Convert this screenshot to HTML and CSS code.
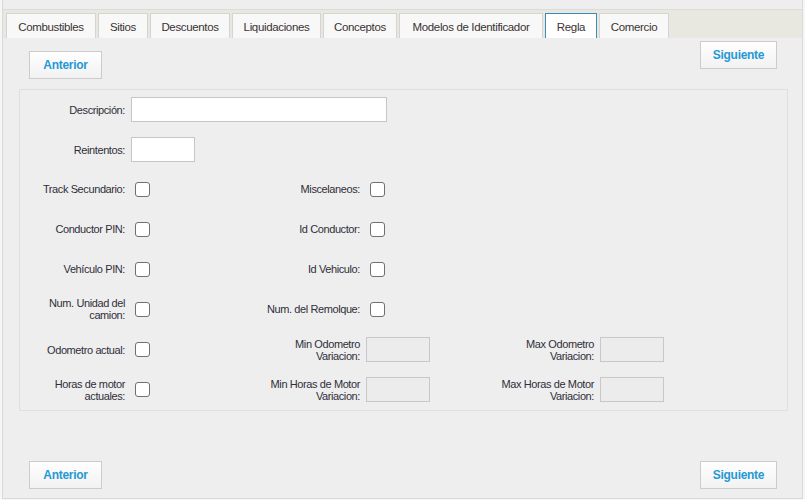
FILE: index.html
```html
<!DOCTYPE html>
<html lang="es">
<head>
<meta charset="utf-8">
<title>Regla</title>
<link rel="stylesheet" href="styles.css">
</head>
<body>
<div class="panel">
  <ul class="tabs">
    <li class="tab tab-combustibles">Combustibles</li>
    <li class="tab tab-sitios">Sitios</li>
    <li class="tab tab-descuentos">Descuentos</li>
    <li class="tab tab-liquidaciones">Liquidaciones</li>
    <li class="tab tab-conceptos">Conceptos</li>
    <li class="tab tab-modelos">Modelos de Identificador</li>
    <li class="tab tab-regla active">Regla</li>
    <li class="tab tab-comercio">Comercio</li>
  </ul>
  <div class="nav nav-top">
    <button class="btn btn-prev">Anterior</button>
    <button class="btn btn-next">Siguiente</button>
  </div>
  <div class="form">
    <div class="row">
      <div class="cell cell-full"><label class="lbl">Descripción:</label><input class="txt txt-wide" type="text"></div>
    </div>
    <div class="row">
      <div class="cell"><label class="lbl">Reintentos:</label><input class="txt txt-small" type="text"></div>
    </div>
    <div class="row">
      <div class="cell"><label class="lbl">Track Secundario:</label><input class="chk" type="checkbox"></div>
      <div class="cell"><label class="lbl">Miscelaneos:</label><input class="chk" type="checkbox"></div>
    </div>
    <div class="row">
      <div class="cell"><label class="lbl">Conductor PIN:</label><input class="chk" type="checkbox"></div>
      <div class="cell"><label class="lbl">Id Conductor:</label><input class="chk" type="checkbox"></div>
    </div>
    <div class="row">
      <div class="cell"><label class="lbl">Vehículo PIN:</label><input class="chk" type="checkbox"></div>
      <div class="cell"><label class="lbl">Id Vehiculo:</label><input class="chk" type="checkbox"></div>
    </div>
    <div class="row">
      <div class="cell"><label class="lbl">Num. Unidad del camion:</label><input class="chk" type="checkbox"></div>
      <div class="cell"><label class="lbl">Num. del Remolque:</label><input class="chk" type="checkbox"></div>
    </div>
    <div class="row">
      <div class="cell"><label class="lbl">Odometro actual:</label><input class="chk" type="checkbox"></div>
      <div class="cell"><label class="lbl">Min Odometro Variacion:</label><input class="txt txt-small" type="text" disabled></div>
      <div class="cell"><label class="lbl">Max Odometro Variacion:</label><input class="txt txt-small" type="text" disabled></div>
    </div>
    <div class="row">
      <div class="cell"><label class="lbl">Horas de motor actuales:</label><input class="chk" type="checkbox"></div>
      <div class="cell"><label class="lbl">Min Horas de Motor Variacion:</label><input class="txt txt-small" type="text" disabled></div>
      <div class="cell"><label class="lbl">Max Horas de Motor Variacion:</label><input class="txt txt-small" type="text" disabled></div>
    </div>
  </div>
  <div class="nav nav-bottom">
    <button class="btn btn-prev">Anterior</button>
    <button class="btn btn-next">Siguiente</button>
  </div>
</div>
</body>
</html>
```

FILE: styles.css
```css
html, body {
  margin: 0;
  padding: 0;
}
body {
  background: #f6f6f6;
  padding: 0 2px;
  font-family: "Liberation Sans", Arial, sans-serif;
  color: #333;
}
.panel {
  background: #eeeeee;
  border: 1px solid #d9d9d9;
  border-top: 0;
  padding: 9px 0 9px;
  height: 499px;
  box-sizing: border-box;
}
.tabs {
  list-style: none;
  margin: 0;
  padding: 3px 0 0 3px;
  border-top: 1px solid #dcdcd6;
  background: #e8e8e0;
  display: flex;
  gap: 2px;
  height: 25px;
}
.tab {
  height: 25px;
  box-sizing: border-box;
  padding: 1px 0 0;
  text-align: center;
  border: 1px solid #d4d4d0;
  border-bottom: 0;
  background: #f8f8f8;
  font-size: 11.5px;
  letter-spacing: -0.35px;
  line-height: 24px;
  color: #3a3333;
  white-space: nowrap;
}
.tab-combustibles { width: 90px; }
.tab-sitios { width: 50px; }
.tab-descuentos { width: 80px; }
.tab-liquidaciones { width: 89px; }
.tab-conceptos { width: 74px; }
.tab-modelos { width: 144px; }
.tab-regla { width: 52px; }
.tab-comercio { width: 70px; }
.tab.active {
  background: #ffffff;
  border-color: #3b8db6;
}
.nav {
  display: flex;
  justify-content: space-between;
  align-items: flex-start;
  padding: 0 25px 0 26px;
}
.nav-top .btn-prev {
  margin-top: 13px;
}
.nav-top .btn-next {
  margin-top: 3px;
}
.nav-bottom {
  margin-top: 50px;
}
.btn {
  height: 28px;
  padding: 0;
  border: 1px solid #cccccc;
  background: linear-gradient(#ffffff, #f2f2f2);
  color: #2599d4;
  font-family: "Liberation Sans", Arial, sans-serif;
  font-weight: bold;
  font-size: 12px;
  letter-spacing: -0.3px;
  cursor: pointer;
}
.btn-prev {
  width: 73px;
}
.btn-next {
  width: 77px;
}
.form {
  margin: 10px 14px 0 16px;
  border: 1px solid #e0e0d8;
  padding: 7px 0 9px;
  display: flex;
  flex-direction: column;
  gap: 16px;
}
.row {
  display: grid;
  grid-template-columns: 235px 234px auto;
  height: 24px;
}
.cell {
  display: flex;
  align-items: center;
}
.cell-full {
  grid-column: 1 / -1;
}
.lbl {
  width: 105px;
  flex: none;
  margin-right: 6px;
  text-align: right;
  font-size: 11px;
  letter-spacing: -0.4px;
  line-height: 12px;
  color: #2f2f3a;
}
.txt {
  box-sizing: border-box;
  height: 25px;
  margin: 0;
  border: 1px solid #c6c6c6;
  background: #ffffff;
  padding: 0 4px;
}
.txt-wide {
  width: 256px;
}
.txt-small {
  width: 64px;
}
.txt:disabled {
  background: #ececec;
  border-color: #c8c8c8;
}
.chk {
  appearance: none;
  -webkit-appearance: none;
  box-sizing: border-box;
  width: 15px;
  height: 15px;
  margin: 0 0 0 4px;
  border: 1px solid #707070;
  border-radius: 3px;
  background: #ffffff;
}
```
